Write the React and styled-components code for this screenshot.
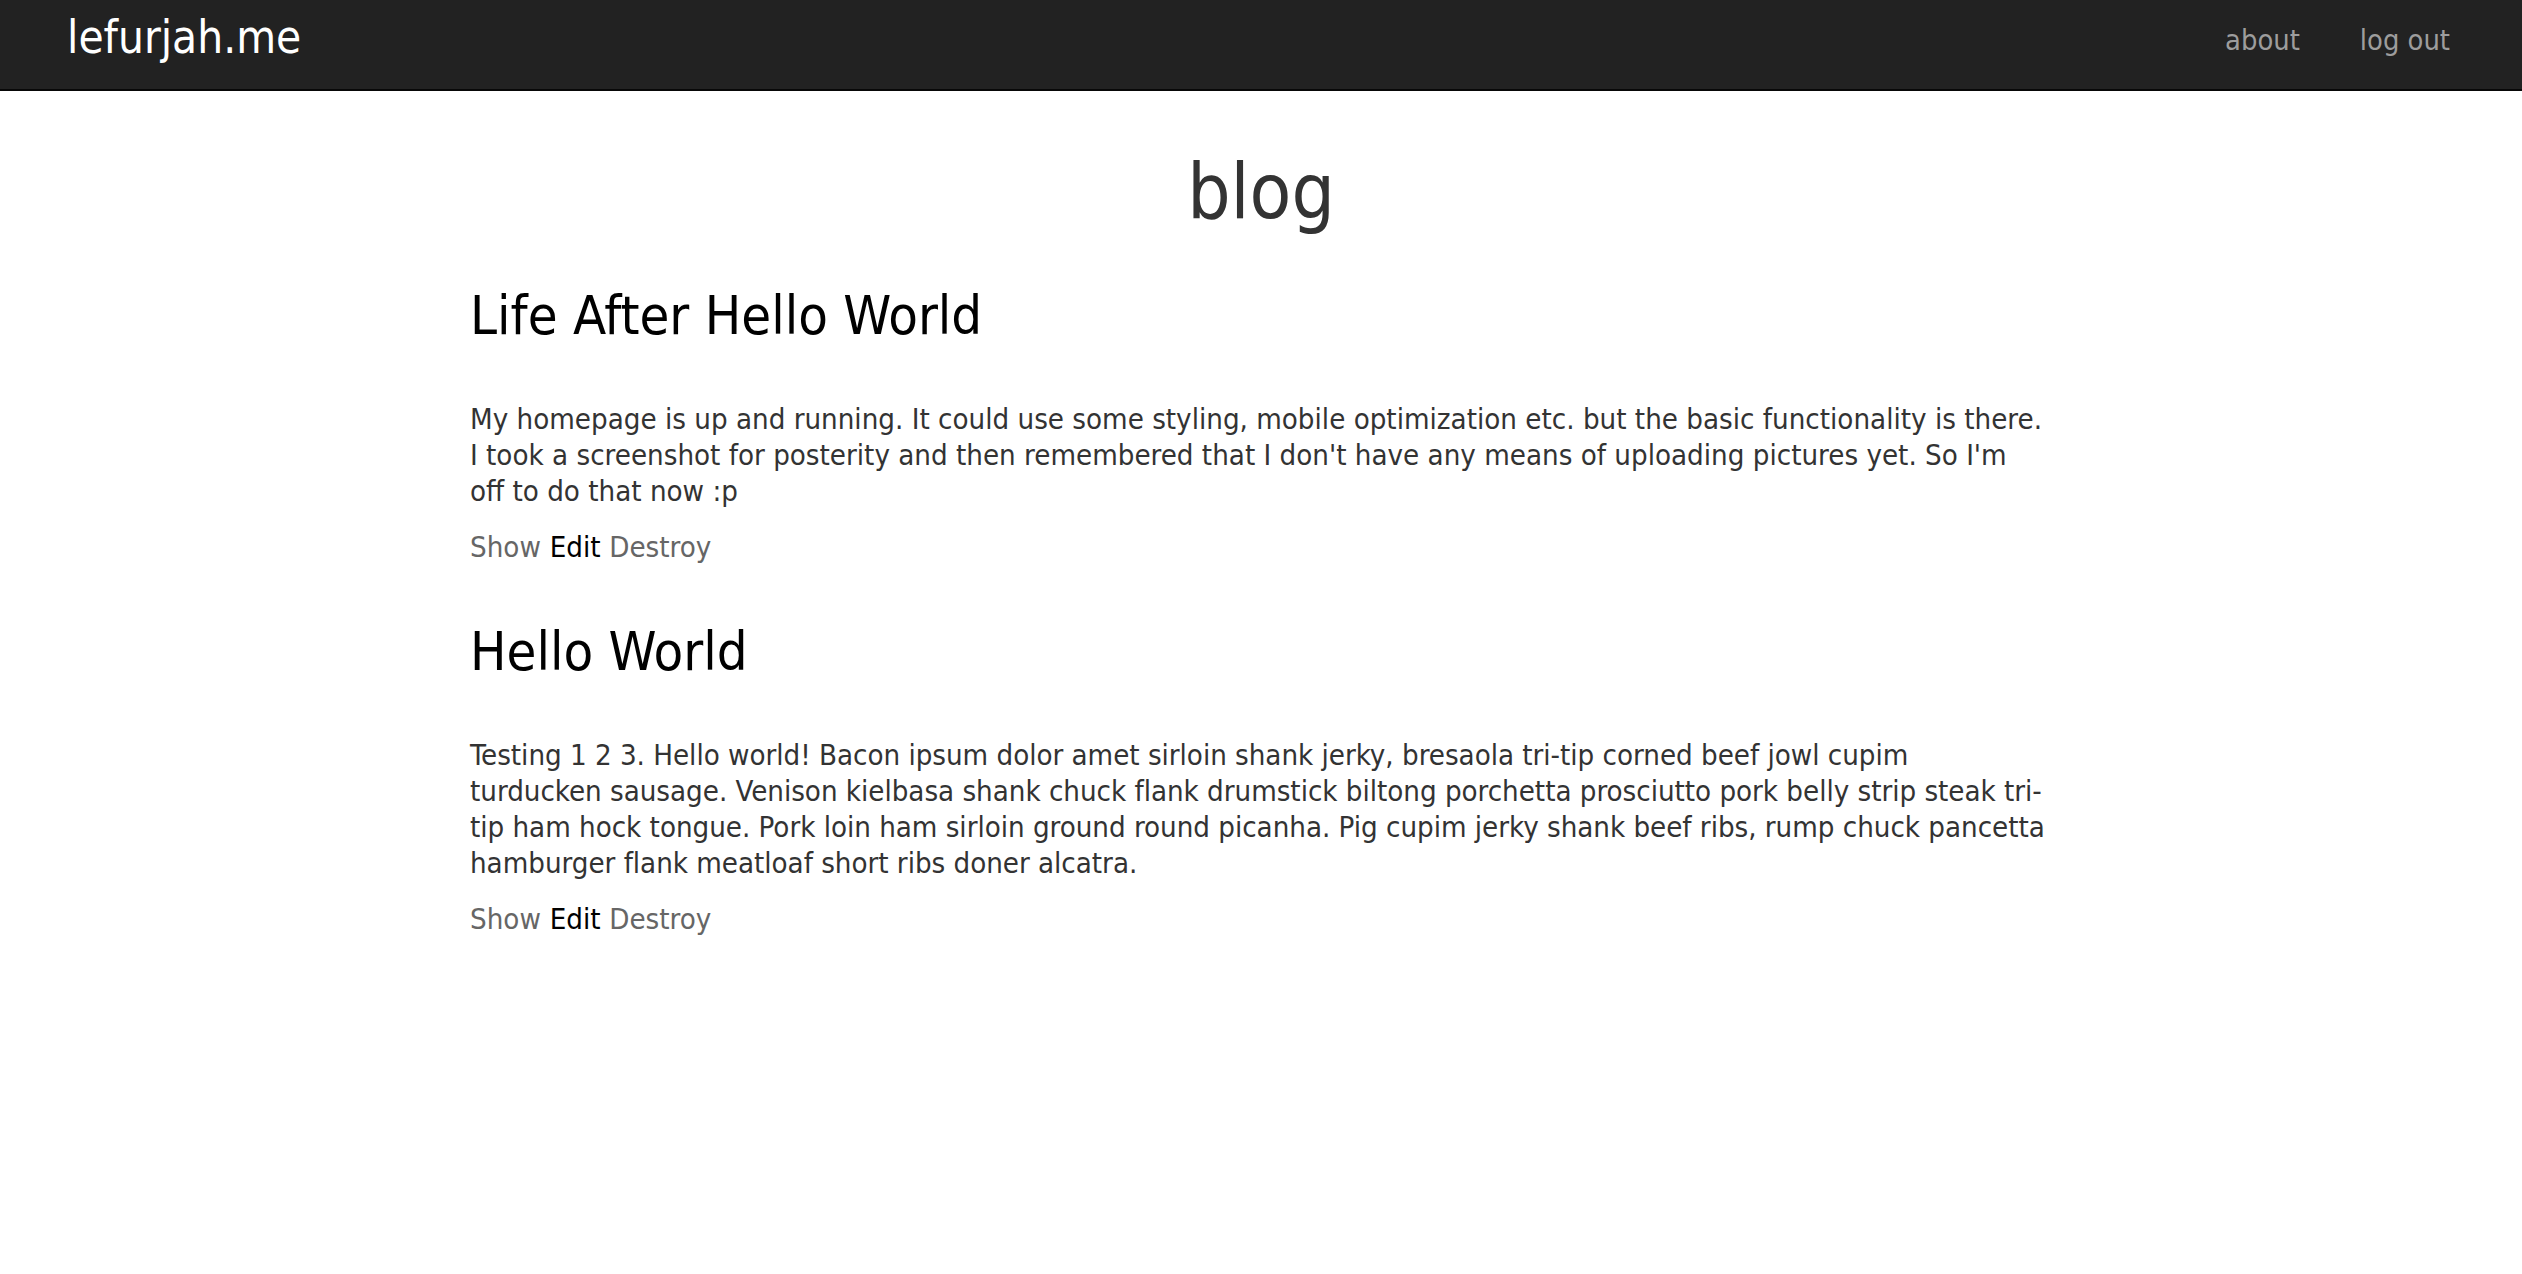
import React from 'react'
import styled, { createGlobalStyle } from 'styled-components'

const GlobalStyle = createGlobalStyle`
  html, body {
    margin: 0;
    padding: 0;
    background: #fff;
  }
  body {
    font-family: "DejaVu Sans Condensed", "DejaVu Sans", sans-serif;
    font-stretch: condensed;
    font-size: 29.2px;
    line-height: 36px;
    color: #333;
  }
`

const Navbar = styled.nav`
  height: 89px;
  background: #222;
  border-bottom: 2px solid #080808;
  display: flex;
  align-items: center;
  justify-content: space-between;
  padding: 0 42px 0 67px;
`

const Brand = styled.a`
  color: #fff;
  font-size: 45.5px;
  line-height: 1;
  text-decoration: none;
  margin-top: -14px;
`

const NavLinks = styled.ul`
  display: flex;
  list-style: none;
  margin: 0;
  padding: 0;
  margin-top: -10px;
`

const NavLink = styled.a`
  display: block;
  padding: 0 30px;
  color: #9d9d9d;
  font-size: 28.8px;
  text-decoration: none;
`

// the page column: left edge sits at 470px, text wraps just short of 2046px
const Main = styled.main`
  width: 1582px;
  margin: 0 auto;
`

const Title = styled.h1`
  margin: 59px 0 52px;
  text-align: center;
  font-size: 76px;
  line-height: 1.1;
  font-weight: normal;
  color: #333;
`

const Post = styled.article`
  padding-right: 7px;

  & + & {
    margin-top: 57px;
  }
`

const PostTitle = styled.h2`
  margin: 0 0 56px;
  font-size: 54px;
  line-height: 1.1;
  font-weight: normal;
  color: #000;
`

const Body = styled.p`
  margin: 0 0 20px;
  letter-spacing: ${props => props.$tracking || 0}px;
`

const Actions = styled.div`
  display: flex;
  gap: 0.3em;
`

const Action = styled.a`
  color: ${props => (props.$dark ? '#000' : '#666')};
  text-decoration: none;
`

const posts = [
  {
    title: 'Life After Hello World',
    tracking: 0,
    body:
      "My homepage is up and running. It could use some styling, mobile optimization etc. but the basic functionality is there. I took a screenshot for posterity and then remembered that I don't have any means of uploading pictures yet. So I'm off to do that now :p",
  },
  {
    title: 'Hello World',
    tracking: -0.025,
    body:
      'Testing 1 2 3. Hello world! Bacon ipsum dolor amet sirloin shank jerky, bresaola tri-tip corned beef jowl cupim turducken sausage. Venison kielbasa shank chuck flank drumstick biltong porchetta prosciutto pork belly strip steak tri-tip ham hock tongue. Pork loin ham sirloin ground round picanha. Pig cupim jerky shank beef ribs, rump chuck pancetta hamburger flank meatloaf short ribs doner alcatra.',
  },
]

export default function App() {
  return (
    <>
      <GlobalStyle />
      <Navbar>
        <Brand href="#">lefurjah.me</Brand>
        <NavLinks>
          <li>
            <NavLink href="#">about</NavLink>
          </li>
          <li>
            <NavLink href="#">log out</NavLink>
          </li>
        </NavLinks>
      </Navbar>
      <Main>
        <Title>blog</Title>
        {posts.map(post => (
          <Post key={post.title}>
            <PostTitle>{post.title}</PostTitle>
            <Body $tracking={post.tracking}>{post.body}</Body>
            <Actions>
              <Action href="#">Show</Action>
              <Action href="#" $dark>
                Edit
              </Action>
              <Action href="#">Destroy</Action>
            </Actions>
          </Post>
        ))}
      </Main>
    </>
  )
}
